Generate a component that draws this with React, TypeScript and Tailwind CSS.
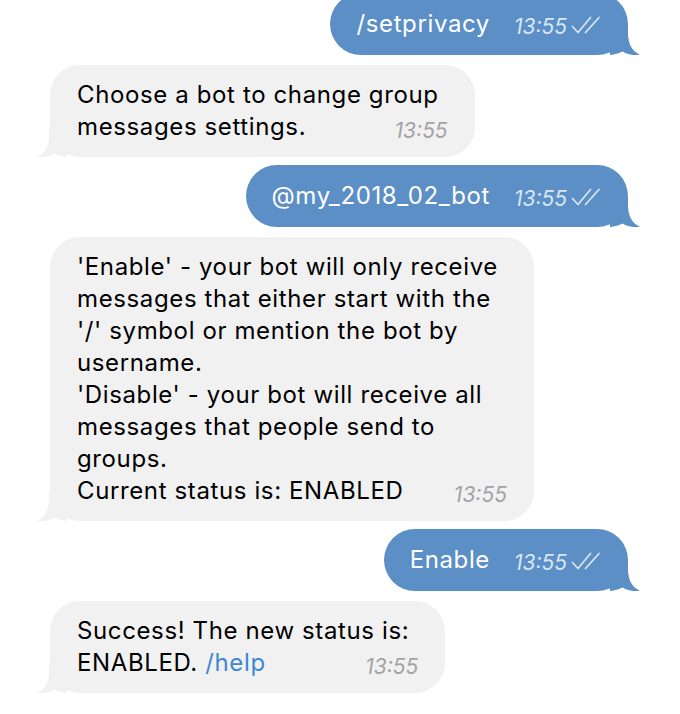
import React from "react";

type Msg = {
  out: boolean;
  lines: React.ReactNode[];
};

const msgs: Msg[] = [
  { out: true, lines: ["/setprivacy"] },
  { out: false, lines: ["Choose a bot to change group", "messages settings."] },
  { out: true, lines: ["@my_2018_02_bot"] },
  {
    out: false,
    lines: [
      "'Enable' - your bot will only receive",
      "messages that either start with the",
      "'/' symbol or mention the bot by",
      "username.",
      "'Disable' - your bot will receive all",
      "messages that people send to",
      "groups.",
      "Current status is: ENABLED",
    ],
  },
  { out: true, lines: ["Enable"] },
  {
    out: false,
    lines: [
      "Success! The new status is:",
      <>
        ENABLED. <span className="text-[#3f86d3]">/help</span>
      </>,
    ],
  },
];

function Checks() {
  return (
    <svg width="30" height="18" viewBox="0 0 30 18" fill="none" className="ml-[4px]">
      <path d="M1.5 10.5 L7 16.5 L19.5 1.5" stroke="#d9e6f4" strokeWidth="1.7" strokeLinecap="round" strokeLinejoin="round" />
      <path d="M14.5 16.5 L28 1.5" stroke="#d9e6f4" strokeWidth="1.7" strokeLinecap="round" />
    </svg>
  );
}

function TailRight() {
  return (
    <svg width="30" height="30" viewBox="0 0 30 30" className="absolute right-[-12px] bottom-0">
      <path d="M0 0 H18 V8 C18 19 22 26 30 30 C23 30.6 17 29.4 12.5 26.6 C9 28.6 5 29.6 0 30 Z" fill="#5b8fc6" />
    </svg>
  );
}

function TailLeft() {
  return (
    <svg width="30" height="30" viewBox="0 0 30 30" className="absolute left-[-13px] bottom-0">
      <path d="M30 0 H12 V8 C12 19 8 26 0 30 C7 30.6 13 29.4 17.5 26.6 C21 28.6 25 29.6 30 30 Z" fill="#f1f1f2" />
    </svg>
  );
}

function Bubble({ m }: { m: Msg }) {
  const last = m.lines.length - 1;
  if (m.out) {
    return (
      <div className="self-end relative mt-[8px] first:-mt-[7px]">
        <div className="relative z-10 bg-[#5b8fc6] rounded-[31px] pl-[26px] pr-[27px] py-[15px] flex items-baseline text-white h-[62px]">
          <span className="whitespace-nowrap">{m.lines[0]}</span>
          <span className="ml-[24px] flex items-baseline translate-y-[2px]">
            <span className="italic text-[21px] leading-[20px] tracking-[0px] text-[#d9e6f4]">13:55</span>
            <Checks />
          </span>
        </div>
        <TailRight />
      </div>
    );
  }
  return (
    <div className="self-start relative mt-[10px]">
      <div className="relative z-10 bg-[#f1f1f2] rounded-[30px] pl-[27px] pr-[27px] py-[14px] flex flex-col text-black">
        {m.lines.map((l, i) =>
          i === last ? (
            <div key={i} className="flex items-baseline justify-between h-[32px]">
              <span className="whitespace-nowrap">{l}</span>
              <span className="ml-[28px] italic text-[21px] leading-[20px] tracking-[0px] text-[#a3a3a6] translate-y-[3px]">13:55</span>
            </div>
          ) : (
            <div key={i} className="whitespace-nowrap pr-[9px]">
              {l}
            </div>
          )
        )}
      </div>
      <TailLeft />
    </div>
  );
}

export default function App() {
  return (
    <div
      className="w-[680px] h-[714px] overflow-hidden bg-white flex flex-col pl-[50px] pr-[52px] text-[24px] leading-[32px] tracking-[0.62px]"
      style={{ fontFamily: "Inter, 'Noto Sans', sans-serif" }}
    >
      {msgs.map((m, i) => (
        <Bubble key={i} m={m} />
      ))}
    </div>
  );
}
